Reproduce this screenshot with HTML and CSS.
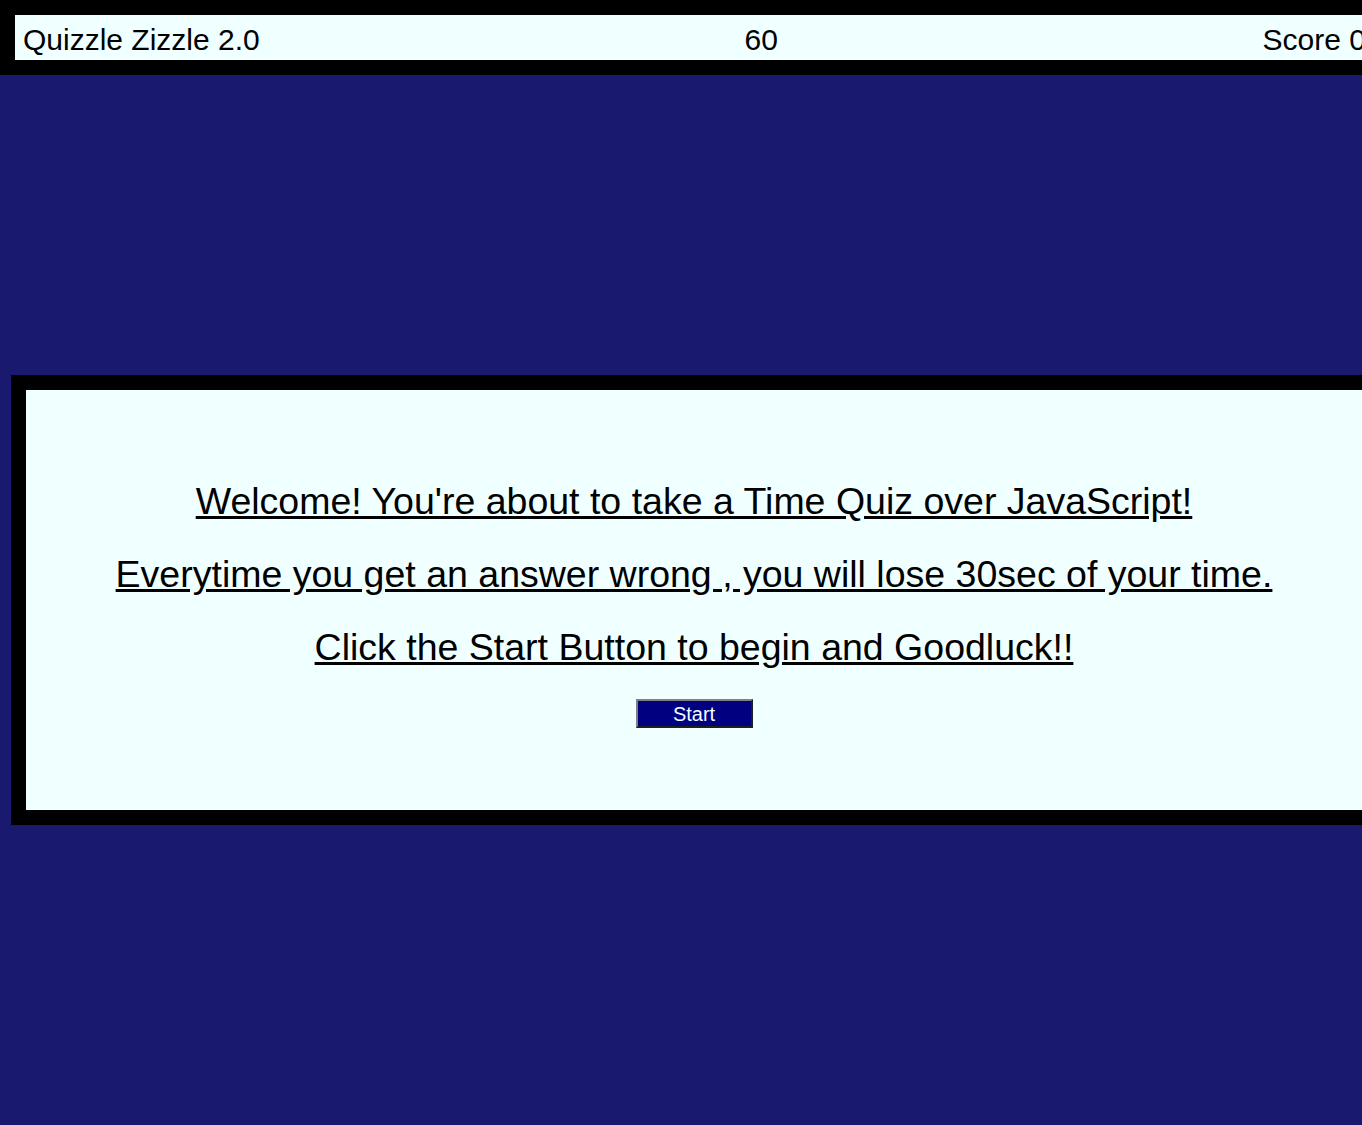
FILE: index.html
```html
<!DOCTYPE html>
<html lang="en">
<head>
<meta charset="utf-8">
<title>Quizzle Zizzle 2.0</title>
<link rel="stylesheet" href="styles.css">
</head>
<body>
<header class="topbar">
  <span class="title">Quizzle Zizzle 2.0</span>
  <span class="timer">60</span>
  <span class="score">Score 0</span>
</header>
<main class="intro">
  <p class="line">Welcome! You're about to take a Time Quiz over JavaScript!</p>
  <p class="line">Everytime you get an answer wrong , you will lose 30sec of your time.</p>
  <p class="line">Click the Start Button to begin and Goodluck!!</p>
  <button class="start-btn" type="button">Start</button>
</main>
</body>
</html>
```
FILE: styles.css
```css
html, body {
  margin: 0;
  padding: 0;
  overflow: hidden;
}
body {
  background: #191970;
  font-family: "Liberation Sans", Arial, sans-serif;
  color: #000;
  width: 1362px;
  height: 1125px;
}
.topbar {
  box-sizing: border-box;
  width: 1389px;
  height: 75px;
  border: 15px solid #000;
  background: #f0ffff;
  padding: 8px 8px 0;
  display: flex;
  justify-content: space-between;
  align-items: flex-start;
  font-size: 30px;
  line-height: 34px;
}
.intro {
  box-sizing: border-box;
  margin: 300px 0 0 11px;
  width: 1366px;
  height: 450px;
  border: 15px solid #000;
  background: #f0ffff;
  padding-top: 91px;
  display: flex;
  flex-direction: column;
  align-items: center;
}
.line {
  margin: 0 0 33px;
  font-size: 37.5px;
  line-height: 40px;
  text-decoration: underline;
  text-align: center;
  white-space: nowrap;
}
.line:last-of-type {
  margin-bottom: 32px;
}
.start-btn {
  box-sizing: border-box;
  width: 117px;
  height: 29px;
  margin: 0;
  padding: 0;
  background: #000080;
  color: #f0ffff;
  font-family: "Liberation Sans", Arial, sans-serif;
  font-size: 20px;
  line-height: 24px;
  border-style: solid;
  border-width: 2px;
  border-color: #808080 #1f1f1f #1f1f1f #808080;
}
```
